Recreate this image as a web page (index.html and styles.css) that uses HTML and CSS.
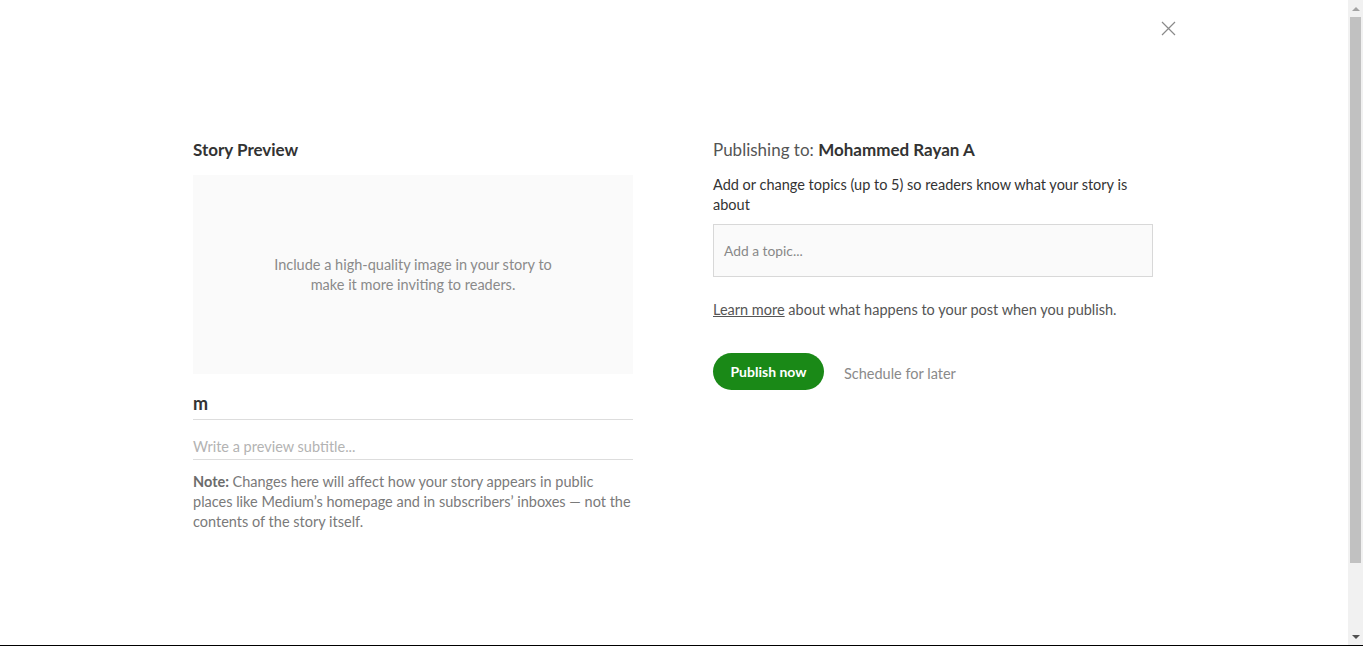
FILE: index.html
```html
<!DOCTYPE html>
<html>
<head>
<meta charset="utf-8">
<link rel="stylesheet" href="styles.css">
</head>
<body>
<div class="screen">
  <div class="page">
    <div class="topbar">
      <button class="close" aria-label="Close">
        <svg width="15" height="15" viewBox="0 0 15 15"><path d="M1 1 L14 14 M14 1 L1 14" stroke="#8a8a8a" stroke-width="1.2" fill="none"/></svg>
      </button>
    </div>
    <div class="content">
      <section class="left">
        <h2 class="heading">Story Preview</h2>
        <div class="imagebox">
          <p>Include a high-quality image in your story to<br>make it more inviting to readers.</p>
        </div>
        <div class="field title">m</div>
        <div class="field subtitle">Write a preview subtitle...</div>
        <p class="note"><b>Note: </b>Changes here will affect how your story appears in public places like Medium’s homepage and in subscribers’ inboxes — not the contents of the story itself.</p>
      </section>
      <section class="right">
        <h2 class="pubto">Publishing to: <b>Mohammed Rayan A</b></h2>
        <p class="topics">Add or change topics (up to 5) so readers know what your story is about</p>
        <div class="topicbox">Add a topic...</div>
        <p class="learn"><a href="#">Learn more</a> about what happens to your post when you publish.</p>
        <div class="actions">
          <button class="publish">Publish now</button>
          <span class="schedule">Schedule for later</span>
        </div>
      </section>
    </div>
  </div>
  <div class="scrollbar">
    <div class="arrow up"></div>
    <div class="track"><div class="thumb"></div></div>
    <div class="arrow down"></div>
  </div>
</div>
<div class="bottomline"></div>
</body>
</html>
```
FILE: styles.css
```css
* { box-sizing: border-box; }
html, body { margin: 0; padding: 0; }
body {
  width: 1363px;
  height: 646px;
  overflow: hidden;
  background: #fff;
  font-family: Lato, "Liberation Sans", sans-serif;
  color: #333;
}
.screen {
  display: flex;
  height: 645px;
}
.page {
  flex: 1;
  display: flex;
  flex-direction: column;
}
.bottomline {
  height: 1px;
  background: #000;
}
.topbar {
  display: flex;
  justify-content: flex-end;
  padding: 21px 172px 0 0;
  height: 130px;
}
.close {
  border: 0;
  background: none;
  padding: 0;
  width: 15px;
  height: 15px;
  display: block;
}
.close svg { display: block; }
.content {
  display: flex;
  gap: 80px;
  padding-left: 193px;
}
.left, .right { width: 440px; }
.heading {
  margin: 0;
  font-size: 17px;
  font-weight: 700;
  line-height: 40px;
  color: #333;
}
.imagebox {
  margin-top: 5px;
  height: 199px;
  background: #fafafa;
  display: flex;
  align-items: center;
  justify-content: center;
  text-align: center;
}
.imagebox p {
  margin: 0;
  font-size: 14.5px;
  line-height: 20px;
  color: #8a8a8a;
}
.field {
  border-bottom: 1px solid #ddd;
}
.title {
  margin-top: 16px;
  font-size: 18px;
  font-weight: 700;
  line-height: 27px;
  color: #333;
  padding-bottom: 2px;
}
.subtitle {
  margin-top: 15px;
  font-size: 14.5px;
  line-height: 24px;
  color: #b3b3b3;
}
.note {
  margin: 12px 0 0;
  font-size: 14.5px;
  line-height: 20px;
  color: #7a7a7a;
}
.note b { color: #6b6b6b; }
.pubto {
  margin: 0;
  font-size: 17px;
  font-weight: 400;
  line-height: 40px;
  color: #555;
}
.pubto b { color: #333; }
.topics {
  margin: 5px 0 0;
  font-size: 14.5px;
  line-height: 20px;
  color: #333;
}
.topicbox {
  margin-top: 9px;
  height: 53px;
  border: 1px solid #d8d8d8;
  background: #fafafa;
  padding: 0 10px;
  display: flex;
  align-items: center;
  font-size: 13.8px;
  color: #888;
}
.learn {
  margin: 23px 0 0;
  font-size: 14.5px;
  line-height: 20px;
  color: #555;
}
.learn a { color: #555; text-decoration: underline; }
.actions {
  margin-top: 33px;
  display: flex;
  align-items: center;
  gap: 20px;
}
.publish {
  height: 37px;
  width: 111px;
  border: 0;
  border-radius: 999px;
  background: #1a8917;
  color: #fff;
  font-family: Lato, "Liberation Sans", sans-serif;
  font-size: 14px;
  font-weight: 700;
  padding: 0;
}
.schedule {
  font-size: 14.5px;
  color: #8a8a8a;
  padding-top: 3px;
}
.scrollbar {
  width: 15px;
  background: #f1f1f1;
  display: flex;
  flex-direction: column;
}
.arrow {
  height: 17px;
  display: flex;
  align-items: center;
  justify-content: center;
}
.arrow::before {
  content: "";
  width: 0; height: 0;
  border-left: 4px solid transparent;
  border-right: 4px solid transparent;
}
.arrow.up::before { border-bottom: 4px solid #a3a3a3; }
.arrow.down::before { border-top: 4px solid #505050; }
.track {
  flex: 1;
  padding: 0 2px;
}
.thumb {
  height: 546px;
  background: #c1c1c1;
}
```
